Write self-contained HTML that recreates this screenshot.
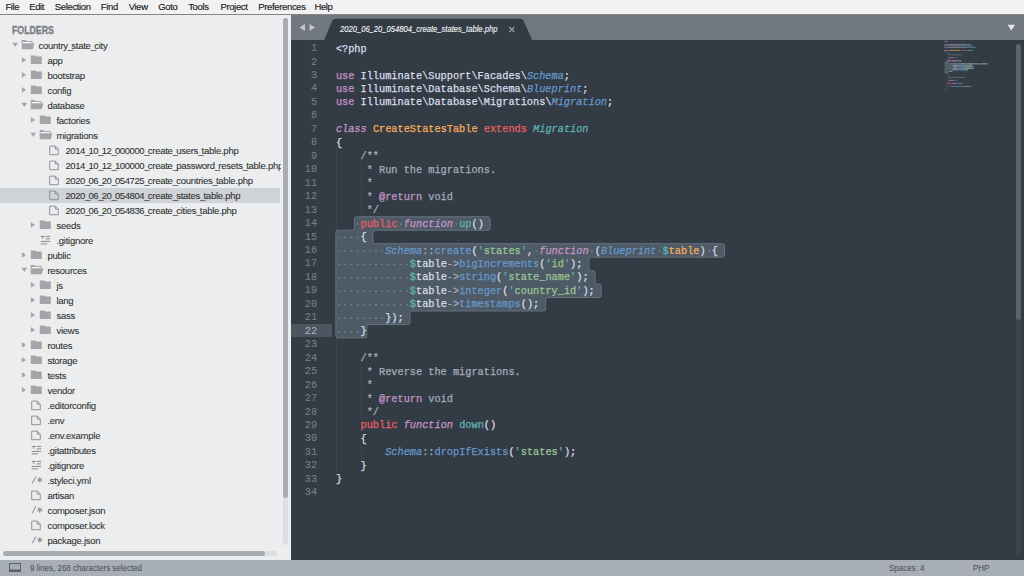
<!DOCTYPE html>
<html><head><meta charset="utf-8"><style>
html,body{margin:0;padding:0;width:1024px;height:576px;overflow:hidden;background:#333b45}
*{box-sizing:border-box}
.abs{position:absolute}
.ov{position:absolute;left:0;top:0;overflow:visible}
#menu{position:absolute;left:0;top:0;width:1024px;height:15px;background:#f2f2f2;border-bottom:1px solid #858585}
.mi{position:absolute;top:1px;font:9.5px/12px "Liberation Sans",sans-serif;color:#1a1a1a;letter-spacing:-0.35px;white-space:nowrap;-webkit-text-stroke:0.15px currentColor}
#side{position:absolute;left:0;top:15px;width:291px;height:545px;background:#ebedef;overflow:hidden}
#sidein{position:absolute;left:0;top:-15px;width:291px;height:576px}
.sr{position:absolute;height:15px;font:9.5px/15px "Liberation Sans",sans-serif;color:#303030;white-space:nowrap;-webkit-text-stroke:0.08px currentColor}
#folders{position:absolute;left:12.2px;top:24.6px;font:bold 10.2px/12px "Liberation Sans",sans-serif;color:#7a7c80;transform-origin:0 0;transform:scaleX(0.86);-webkit-text-stroke:0.3px currentColor}
#selrow{position:absolute;left:0;top:187.5px;width:280px;height:15px;background:#cfd2d6}
#tabbar{position:absolute;left:291px;top:15px;width:733px;height:25.3px;background:#71777f}
#editor{position:absolute;left:291px;top:40px;width:733px;height:520px;background:#333b45}
#status{position:absolute;left:0;top:560px;width:1024px;height:16px;background:#a8aeb7}
.st{position:absolute;top:1.5px;font:9px/12px "Liberation Sans",sans-serif;color:#474b51;white-space:nowrap;transform-origin:0 0;transform:scaleX(0.885)}
.ln{position:absolute;left:335.9px;height:13.46px;font:10.28px/13.46px "Liberation Mono",monospace;white-space:pre;color:#d8dee9;-webkit-text-stroke:0.25px currentColor}
.gn{position:absolute;left:291px;width:26.2px;-webkit-text-stroke:0.1px currentColor;height:13.46px;text-align:right;font:10.28px/13.46px "Liberation Mono",monospace;color:#75808a}
.gn.cur{color:#a9b1b9}
#curline{position:absolute;left:291px;top:323.9px;width:41px;height:13.46px;background:#4d5660}
</style></head><body>
<div id="menu"><div class="mi" style="left:5.4px">File</div><div class="mi" style="left:29.2px">Edit</div><div class="mi" style="left:54.8px">Selection</div><div class="mi" style="left:100.8px">Find</div><div class="mi" style="left:128.8px">View</div><div class="mi" style="left:158.2px">Goto</div><div class="mi" style="left:188.2px">Tools</div><div class="mi" style="left:220.4px">Project</div><div class="mi" style="left:258.3px">Preferences</div><div class="mi" style="left:314.4px">Help</div></div>
<div id="side">
 <div id="sidein">
  <div id="selrow"></div>
  <div id="folders">FOLDERS</div>
  <svg class="ov" width="291" height="576">
<path d="M12.3 42.7 h5.6 l-2.8 4.2 z" fill="#a3a5a8"/>
<path d="M21.70 40.10 h3.9 l0.9 0.9 h6.1 v2.3 h-1.2 v-1.1 h-8.5 v6.9 h-1.2 z" fill="#a3a5a8"/><rect x="22.90" y="42.00" width="8.6" height="1.3" fill="#f7f8f9"/><path d="M23.30 43.30 h11 l-1.5 6 h-11 z" fill="#a3a5a8"/>
<path d="M21.8 57.1 v5.6 l4.2 -2.8 z" fill="#a3a5a8"/>
<path d="M30.8 55.5 h4.6 l1 1 h5.4 v7.6 h-11 z" fill="#a3a5a8"/>
<path d="M21.8 72.1 v5.6 l4.2 -2.8 z" fill="#a3a5a8"/>
<path d="M30.8 70.5 h4.6 l1 1 h5.4 v7.6 h-11 z" fill="#a3a5a8"/>
<path d="M21.8 87.1 v5.6 l4.2 -2.8 z" fill="#a3a5a8"/>
<path d="M30.8 85.5 h4.6 l1 1 h5.4 v7.6 h-11 z" fill="#a3a5a8"/>
<path d="M21.5 102.7 h5.6 l-2.8 4.2 z" fill="#a3a5a8"/>
<path d="M30.70 100.10 h3.9 l0.9 0.9 h6.1 v2.3 h-1.2 v-1.1 h-8.5 v6.9 h-1.2 z" fill="#a3a5a8"/><rect x="31.90" y="102.00" width="8.6" height="1.3" fill="#f7f8f9"/><path d="M32.30 103.30 h11 l-1.5 6 h-11 z" fill="#a3a5a8"/>
<path d="M30.8 117.1 v5.6 l4.2 -2.8 z" fill="#a3a5a8"/>
<path d="M39.8 115.5 h4.6 l1 1 h5.4 v7.6 h-11 z" fill="#a3a5a8"/>
<path d="M30.5 132.7 h5.6 l-2.8 4.2 z" fill="#a3a5a8"/>
<path d="M39.70 130.10 h3.9 l0.9 0.9 h6.1 v2.3 h-1.2 v-1.1 h-8.5 v6.9 h-1.2 z" fill="#a3a5a8"/><rect x="40.90" y="132.00" width="8.6" height="1.3" fill="#f7f8f9"/><path d="M41.30 133.30 h11 l-1.5 6 h-11 z" fill="#a3a5a8"/>
<path d="M49.7 146.1 h5.6 l3 3 v5.6 h-8.6 z M55.3 146.1 v3 h3" fill="none" stroke="#909397" stroke-width="1"/>
<path d="M49.7 161.1 h5.6 l3 3 v5.6 h-8.6 z M55.3 161.1 v3 h3" fill="none" stroke="#909397" stroke-width="1"/>
<path d="M49.7 176.1 h5.6 l3 3 v5.6 h-8.6 z M55.3 176.1 v3 h3" fill="none" stroke="#909397" stroke-width="1"/>
<path d="M49.7 191.1 h5.6 l3 3 v5.6 h-8.6 z M55.3 191.1 v3 h3" fill="none" stroke="#909397" stroke-width="1"/>
<path d="M49.7 206.1 h5.6 l3 3 v5.6 h-8.6 z M55.3 206.1 v3 h3" fill="none" stroke="#909397" stroke-width="1"/>
<path d="M30.8 222.1 v5.6 l4.2 -2.8 z" fill="#a3a5a8"/>
<path d="M39.8 220.5 h4.6 l1 1 h5.4 v7.6 h-11 z" fill="#a3a5a8"/>
<g stroke="#85888c" stroke-width="1"><line x1="40.7" y1="236.4" x2="44.7" y2="236.4"/><line x1="42.7" y1="236.4" x2="42.7" y2="238.9"/><line x1="45.7" y1="236.4" x2="50.2" y2="236.4"/><line x1="45.7" y1="238.9" x2="50.2" y2="238.9"/><line x1="40.7" y1="241.4" x2="50.2" y2="241.4"/><line x1="40.7" y1="243.9" x2="47.2" y2="243.9"/></g>
<path d="M21.8 252.1 v5.6 l4.2 -2.8 z" fill="#a3a5a8"/>
<path d="M30.8 250.5 h4.6 l1 1 h5.4 v7.6 h-11 z" fill="#a3a5a8"/>
<path d="M21.5 267.7 h5.6 l-2.8 4.2 z" fill="#a3a5a8"/>
<path d="M30.70 265.10 h3.9 l0.9 0.9 h6.1 v2.3 h-1.2 v-1.1 h-8.5 v6.9 h-1.2 z" fill="#a3a5a8"/><rect x="31.90" y="267.00" width="8.6" height="1.3" fill="#f7f8f9"/><path d="M32.30 268.30 h11 l-1.5 6 h-11 z" fill="#a3a5a8"/>
<path d="M30.8 282.1 v5.6 l4.2 -2.8 z" fill="#a3a5a8"/>
<path d="M39.8 280.5 h4.6 l1 1 h5.4 v7.6 h-11 z" fill="#a3a5a8"/>
<path d="M30.8 297.1 v5.6 l4.2 -2.8 z" fill="#a3a5a8"/>
<path d="M39.8 295.5 h4.6 l1 1 h5.4 v7.6 h-11 z" fill="#a3a5a8"/>
<path d="M30.8 312.1 v5.6 l4.2 -2.8 z" fill="#a3a5a8"/>
<path d="M39.8 310.5 h4.6 l1 1 h5.4 v7.6 h-11 z" fill="#a3a5a8"/>
<path d="M30.8 327.1 v5.6 l4.2 -2.8 z" fill="#a3a5a8"/>
<path d="M39.8 325.5 h4.6 l1 1 h5.4 v7.6 h-11 z" fill="#a3a5a8"/>
<path d="M21.8 342.1 v5.6 l4.2 -2.8 z" fill="#a3a5a8"/>
<path d="M30.8 340.5 h4.6 l1 1 h5.4 v7.6 h-11 z" fill="#a3a5a8"/>
<path d="M21.8 357.1 v5.6 l4.2 -2.8 z" fill="#a3a5a8"/>
<path d="M30.8 355.5 h4.6 l1 1 h5.4 v7.6 h-11 z" fill="#a3a5a8"/>
<path d="M21.8 372.1 v5.6 l4.2 -2.8 z" fill="#a3a5a8"/>
<path d="M30.8 370.5 h4.6 l1 1 h5.4 v7.6 h-11 z" fill="#a3a5a8"/>
<path d="M21.8 387.1 v5.6 l4.2 -2.8 z" fill="#a3a5a8"/>
<path d="M30.8 385.5 h4.6 l1 1 h5.4 v7.6 h-11 z" fill="#a3a5a8"/>
<path d="M31.7 401.1 h5.6 l3 3 v5.6 h-8.6 z M37.3 401.1 v3 h3" fill="none" stroke="#909397" stroke-width="1"/>
<path d="M31.7 416.1 h5.6 l3 3 v5.6 h-8.6 z M37.3 416.1 v3 h3" fill="none" stroke="#909397" stroke-width="1"/>
<path d="M31.7 431.1 h5.6 l3 3 v5.6 h-8.6 z M37.3 431.1 v3 h3" fill="none" stroke="#909397" stroke-width="1"/>
<g stroke="#85888c" stroke-width="1"><line x1="31.7" y1="446.4" x2="35.7" y2="446.4"/><line x1="33.7" y1="446.4" x2="33.7" y2="448.9"/><line x1="36.7" y1="446.4" x2="41.2" y2="446.4"/><line x1="36.7" y1="448.9" x2="41.2" y2="448.9"/><line x1="31.7" y1="451.4" x2="41.2" y2="451.4"/><line x1="31.7" y1="453.9" x2="38.2" y2="453.9"/></g>
<g stroke="#85888c" stroke-width="1"><line x1="31.7" y1="461.4" x2="35.7" y2="461.4"/><line x1="33.7" y1="461.4" x2="33.7" y2="463.9"/><line x1="36.7" y1="461.4" x2="41.2" y2="461.4"/><line x1="36.7" y1="463.9" x2="41.2" y2="463.9"/><line x1="31.7" y1="466.4" x2="41.2" y2="466.4"/><line x1="31.7" y1="468.9" x2="38.2" y2="468.9"/></g>
<g stroke="#85888c" stroke-width="1" fill="none"><line x1="32.3" y1="483.4" x2="35.8" y2="476.4"/><line x1="39.8" y1="477.2" x2="39.8" y2="482.6"/><line x1="37.4" y1="478.6" x2="42.2" y2="481.2"/><line x1="37.4" y1="481.2" x2="42.2" y2="478.6"/></g>
<path d="M31.7 491.1 h5.6 l3 3 v5.6 h-8.6 z M37.3 491.1 v3 h3" fill="none" stroke="#909397" stroke-width="1"/>
<g stroke="#85888c" stroke-width="1" fill="none"><line x1="32.3" y1="513.4" x2="35.8" y2="506.4"/><line x1="39.8" y1="507.2" x2="39.8" y2="512.6"/><line x1="37.4" y1="508.6" x2="42.2" y2="511.2"/><line x1="37.4" y1="511.2" x2="42.2" y2="508.6"/></g>
<path d="M31.7 521.1 h5.6 l3 3 v5.6 h-8.6 z M37.3 521.1 v3 h3" fill="none" stroke="#909397" stroke-width="1"/>
<g stroke="#85888c" stroke-width="1" fill="none"><line x1="32.3" y1="543.4" x2="35.8" y2="536.4"/><line x1="39.8" y1="537.2" x2="39.8" y2="542.6"/><line x1="37.4" y1="538.6" x2="42.2" y2="541.2"/><line x1="37.4" y1="541.2" x2="42.2" y2="538.6"/></g>
</svg>
  <div class="abs" style="left:0;top:0;width:280.5px;height:576px;overflow:hidden"><div class="sr" style="left:38.4px;top:38.4px"><span style="letter-spacing:-0.25px">country</span><span style="letter-spacing:-1.80px">_</span><span style="letter-spacing:-0.25px">state</span><span style="letter-spacing:-1.80px">_</span><span style="letter-spacing:-0.25px">city</span></div>
<div class="sr" style="left:47.4px;top:53.4px"><span style="letter-spacing:-0.25px">app</span></div>
<div class="sr" style="left:47.4px;top:68.4px"><span style="letter-spacing:-0.25px">bootstrap</span></div>
<div class="sr" style="left:47.4px;top:83.4px"><span style="letter-spacing:-0.25px">config</span></div>
<div class="sr" style="left:47.4px;top:98.4px"><span style="letter-spacing:-0.25px">database</span></div>
<div class="sr" style="left:56.4px;top:113.4px"><span style="letter-spacing:-0.25px">factories</span></div>
<div class="sr" style="left:56.4px;top:128.4px"><span style="letter-spacing:-0.25px">migrations</span></div>
<div class="sr" style="left:65.4px;top:143.4px"><span style="letter-spacing:-0.40px">2014</span><span style="letter-spacing:-1.80px">_</span><span style="letter-spacing:-0.40px">10</span><span style="letter-spacing:-1.80px">_</span><span style="letter-spacing:-0.40px">12</span><span style="letter-spacing:-1.80px">_</span><span style="letter-spacing:-0.40px">000000</span><span style="letter-spacing:-1.80px">_</span><span style="letter-spacing:-0.25px">create</span><span style="letter-spacing:-1.80px">_</span><span style="letter-spacing:-0.25px">users</span><span style="letter-spacing:-1.80px">_</span><span style="letter-spacing:-0.25px">table.php</span></div>
<div class="sr" style="left:65.4px;top:158.4px"><span style="letter-spacing:-0.40px">2014</span><span style="letter-spacing:-1.80px">_</span><span style="letter-spacing:-0.40px">10</span><span style="letter-spacing:-1.80px">_</span><span style="letter-spacing:-0.40px">12</span><span style="letter-spacing:-1.80px">_</span><span style="letter-spacing:-0.40px">100000</span><span style="letter-spacing:-1.80px">_</span><span style="letter-spacing:-0.25px">create</span><span style="letter-spacing:-1.80px">_</span><span style="letter-spacing:-0.25px">password</span><span style="letter-spacing:-1.80px">_</span><span style="letter-spacing:-0.25px">resets</span><span style="letter-spacing:-1.80px">_</span><span style="letter-spacing:-0.25px">table.php</span></div>
<div class="sr" style="left:65.4px;top:173.4px"><span style="letter-spacing:-0.40px">2020</span><span style="letter-spacing:-1.80px">_</span><span style="letter-spacing:-0.40px">06</span><span style="letter-spacing:-1.80px">_</span><span style="letter-spacing:-0.40px">20</span><span style="letter-spacing:-1.80px">_</span><span style="letter-spacing:-0.40px">054725</span><span style="letter-spacing:-1.80px">_</span><span style="letter-spacing:-0.25px">create</span><span style="letter-spacing:-1.80px">_</span><span style="letter-spacing:-0.25px">countries</span><span style="letter-spacing:-1.80px">_</span><span style="letter-spacing:-0.25px">table.php</span></div>
<div class="sr sel" style="left:65.4px;top:188.4px"><span style="letter-spacing:-0.40px">2020</span><span style="letter-spacing:-1.80px">_</span><span style="letter-spacing:-0.40px">06</span><span style="letter-spacing:-1.80px">_</span><span style="letter-spacing:-0.40px">20</span><span style="letter-spacing:-1.80px">_</span><span style="letter-spacing:-0.40px">054804</span><span style="letter-spacing:-1.80px">_</span><span style="letter-spacing:-0.25px">create</span><span style="letter-spacing:-1.80px">_</span><span style="letter-spacing:-0.25px">states</span><span style="letter-spacing:-1.80px">_</span><span style="letter-spacing:-0.25px">table.php</span></div>
<div class="sr" style="left:65.4px;top:203.4px"><span style="letter-spacing:-0.40px">2020</span><span style="letter-spacing:-1.80px">_</span><span style="letter-spacing:-0.40px">06</span><span style="letter-spacing:-1.80px">_</span><span style="letter-spacing:-0.40px">20</span><span style="letter-spacing:-1.80px">_</span><span style="letter-spacing:-0.40px">054836</span><span style="letter-spacing:-1.80px">_</span><span style="letter-spacing:-0.25px">create</span><span style="letter-spacing:-1.80px">_</span><span style="letter-spacing:-0.25px">cities</span><span style="letter-spacing:-1.80px">_</span><span style="letter-spacing:-0.25px">table.php</span></div>
<div class="sr" style="left:56.4px;top:218.4px"><span style="letter-spacing:-0.25px">seeds</span></div>
<div class="sr" style="left:56.4px;top:233.4px"><span style="letter-spacing:-0.25px">.gitignore</span></div>
<div class="sr" style="left:47.4px;top:248.4px"><span style="letter-spacing:-0.25px">public</span></div>
<div class="sr" style="left:47.4px;top:263.4px"><span style="letter-spacing:-0.25px">resources</span></div>
<div class="sr" style="left:56.4px;top:278.4px"><span style="letter-spacing:-0.25px">js</span></div>
<div class="sr" style="left:56.4px;top:293.4px"><span style="letter-spacing:-0.25px">lang</span></div>
<div class="sr" style="left:56.4px;top:308.4px"><span style="letter-spacing:-0.25px">sass</span></div>
<div class="sr" style="left:56.4px;top:323.4px"><span style="letter-spacing:-0.25px">views</span></div>
<div class="sr" style="left:47.4px;top:338.4px"><span style="letter-spacing:-0.25px">routes</span></div>
<div class="sr" style="left:47.4px;top:353.4px"><span style="letter-spacing:-0.25px">storage</span></div>
<div class="sr" style="left:47.4px;top:368.4px"><span style="letter-spacing:-0.25px">tests</span></div>
<div class="sr" style="left:47.4px;top:383.4px"><span style="letter-spacing:-0.25px">vendor</span></div>
<div class="sr" style="left:47.4px;top:398.4px"><span style="letter-spacing:-0.25px">.editorconfig</span></div>
<div class="sr" style="left:47.4px;top:413.4px"><span style="letter-spacing:-0.25px">.env</span></div>
<div class="sr" style="left:47.4px;top:428.4px"><span style="letter-spacing:-0.25px">.env.example</span></div>
<div class="sr" style="left:47.4px;top:443.4px"><span style="letter-spacing:-0.25px">.gitattributes</span></div>
<div class="sr" style="left:47.4px;top:458.4px"><span style="letter-spacing:-0.25px">.gitignore</span></div>
<div class="sr" style="left:47.4px;top:473.4px"><span style="letter-spacing:-0.25px">.styleci.yml</span></div>
<div class="sr" style="left:47.4px;top:488.4px"><span style="letter-spacing:-0.25px">artisan</span></div>
<div class="sr" style="left:47.4px;top:503.4px"><span style="letter-spacing:-0.25px">composer.json</span></div>
<div class="sr" style="left:47.4px;top:518.4px"><span style="letter-spacing:-0.25px">composer.lock</span></div>
<div class="sr" style="left:47.4px;top:533.4px"><span style="letter-spacing:-0.25px">package.json</span></div></div>
  <div class="abs" style="left:282.8px;top:18.3px;width:5.2px;height:526.5px;border-radius:2.6px;background:#dcdfe2"></div>
  <div class="abs" style="left:282.8px;top:18.3px;width:5.2px;height:480px;border-radius:2.6px;background:#a9acb0"></div>
  <div class="abs" style="left:3.2px;top:551.2px;width:273.5px;height:5px;border-radius:2.5px;background:#dcdfe2"></div>
  <div class="abs" style="left:3.2px;top:551.2px;width:262.3px;height:5px;border-radius:2.5px;background:#a9acb0"></div>
 </div>
</div>
<div id="tabbar"></div>
<svg class="ov" width="1024" height="576">
 <path d="M299.5 27.5 l5.5 -3.6 v7.2 z" fill="#c3c7cc"/>
 <path d="M315 27.5 l-5.5 -3.6 v7.2 z" fill="#c3c7cc"/>
 <path d="M324 40.5 L332.4 20.2 Q333.1 18.7 334.8 18.7 L520.8 18.7 Q522.6 18.7 523.3 20.2 L532.4 40.5 Z" fill="#333b45"/>
 <path d="M1007.6 24.8 h7.4 l-3.7 5.6 z" fill="#e6e8ea"/>
</svg>
<div class="abs" style="left:340.4px;top:23.2px;font:italic 9.2px/12px 'Liberation Sans',sans-serif;color:#eef0f2;white-space:nowrap;transform-origin:0 0;transform:scaleX(0.828);-webkit-text-stroke:0.15px currentColor">2020_06_20_054804_create_states_table.php</div>
<svg class="ov" width="1024" height="576"><g stroke="#9aa1a8" stroke-width="1.1"><line x1="509.3" y1="27" x2="514.3" y2="32"/><line x1="514.3" y1="27" x2="509.3" y2="32"/></g></svg>
<div id="editor"></div>
<div id="curline"></div>
<div class="gn" style="top:42.10px">1</div>
<div class="gn" style="top:55.56px">2</div>
<div class="gn" style="top:69.02px">3</div>
<div class="gn" style="top:82.48px">4</div>
<div class="gn" style="top:95.94px">5</div>
<div class="gn" style="top:109.40px">6</div>
<div class="gn" style="top:122.86px">7</div>
<div class="gn" style="top:136.32px">8</div>
<div class="gn" style="top:149.78px">9</div>
<div class="gn" style="top:163.24px">10</div>
<div class="gn" style="top:176.70px">11</div>
<div class="gn" style="top:190.16px">12</div>
<div class="gn" style="top:203.62px">13</div>
<div class="gn" style="top:217.08px">14</div>
<div class="gn" style="top:230.54px">15</div>
<div class="gn" style="top:244.00px">16</div>
<div class="gn" style="top:257.46px">17</div>
<div class="gn" style="top:270.92px">18</div>
<div class="gn" style="top:284.38px">19</div>
<div class="gn" style="top:297.84px">20</div>
<div class="gn" style="top:311.30px">21</div>
<div class="gn cur" style="top:324.76px">22</div>
<div class="gn" style="top:338.22px">23</div>
<div class="gn" style="top:351.68px">24</div>
<div class="gn" style="top:365.14px">25</div>
<div class="gn" style="top:378.60px">26</div>
<div class="gn" style="top:392.06px">27</div>
<div class="gn" style="top:405.52px">28</div>
<div class="gn" style="top:418.98px">29</div>
<div class="gn" style="top:432.44px">30</div>
<div class="gn" style="top:445.90px">31</div>
<div class="gn" style="top:459.36px">32</div>
<div class="gn" style="top:472.82px">33</div>
<div class="gn" style="top:486.28px">34</div>
<svg class="ov" width="1024" height="576" viewBox="0 0 1024 576">
<line x1="336.5" y1="149.48" x2="336.5" y2="162.94" stroke="#48515a" stroke-width="1" stroke-dasharray="1 1"/>
<line x1="336.5" y1="162.94" x2="336.5" y2="176.40" stroke="#48515a" stroke-width="1" stroke-dasharray="1 1"/>
<line x1="361.5" y1="162.94" x2="361.5" y2="176.40" stroke="#48515a" stroke-width="1" stroke-dasharray="1 1"/>
<line x1="336.5" y1="176.40" x2="336.5" y2="189.86" stroke="#48515a" stroke-width="1" stroke-dasharray="1 1"/>
<line x1="361.5" y1="176.40" x2="361.5" y2="189.86" stroke="#48515a" stroke-width="1" stroke-dasharray="1 1"/>
<line x1="336.5" y1="189.86" x2="336.5" y2="203.32" stroke="#48515a" stroke-width="1" stroke-dasharray="1 1"/>
<line x1="361.5" y1="189.86" x2="361.5" y2="203.32" stroke="#48515a" stroke-width="1" stroke-dasharray="1 1"/>
<line x1="336.5" y1="203.32" x2="336.5" y2="216.78" stroke="#48515a" stroke-width="1" stroke-dasharray="1 1"/>
<line x1="361.5" y1="203.32" x2="361.5" y2="216.78" stroke="#48515a" stroke-width="1" stroke-dasharray="1 1"/>
<line x1="336.5" y1="216.78" x2="336.5" y2="230.24" stroke="#48515a" stroke-width="1" stroke-dasharray="1 1"/>
<line x1="336.5" y1="337.92" x2="336.5" y2="351.38" stroke="#48515a" stroke-width="1" stroke-dasharray="1 1"/>
<line x1="336.5" y1="351.38" x2="336.5" y2="364.84" stroke="#48515a" stroke-width="1" stroke-dasharray="1 1"/>
<line x1="336.5" y1="364.84" x2="336.5" y2="378.30" stroke="#48515a" stroke-width="1" stroke-dasharray="1 1"/>
<line x1="361.5" y1="364.84" x2="361.5" y2="378.30" stroke="#48515a" stroke-width="1" stroke-dasharray="1 1"/>
<line x1="336.5" y1="378.30" x2="336.5" y2="391.76" stroke="#48515a" stroke-width="1" stroke-dasharray="1 1"/>
<line x1="361.5" y1="378.30" x2="361.5" y2="391.76" stroke="#48515a" stroke-width="1" stroke-dasharray="1 1"/>
<line x1="336.5" y1="391.76" x2="336.5" y2="405.22" stroke="#48515a" stroke-width="1" stroke-dasharray="1 1"/>
<line x1="361.5" y1="391.76" x2="361.5" y2="405.22" stroke="#48515a" stroke-width="1" stroke-dasharray="1 1"/>
<line x1="336.5" y1="405.22" x2="336.5" y2="418.68" stroke="#48515a" stroke-width="1" stroke-dasharray="1 1"/>
<line x1="361.5" y1="405.22" x2="361.5" y2="418.68" stroke="#48515a" stroke-width="1" stroke-dasharray="1 1"/>
<line x1="336.5" y1="418.68" x2="336.5" y2="432.14" stroke="#48515a" stroke-width="1" stroke-dasharray="1 1"/>
<line x1="336.5" y1="432.14" x2="336.5" y2="445.60" stroke="#48515a" stroke-width="1" stroke-dasharray="1 1"/>
<line x1="336.5" y1="445.60" x2="336.5" y2="459.06" stroke="#48515a" stroke-width="1" stroke-dasharray="1 1"/>
<line x1="361.5" y1="445.60" x2="361.5" y2="459.06" stroke="#48515a" stroke-width="1" stroke-dasharray="1 1"/>
<line x1="336.5" y1="459.06" x2="336.5" y2="472.52" stroke="#48515a" stroke-width="1" stroke-dasharray="1 1"/>
<path d="M487.95 216.78 Q490.15 216.78 490.15 218.98L490.15 228.04 Q490.15 230.24 487.95 230.24L375.12 230.24 Q372.92 230.24 372.92 232.44L372.92 241.50 Q372.92 243.70 375.12 243.70L722.41 243.70 Q724.61 243.70 724.61 245.90L724.61 254.96 Q724.61 257.16 722.41 257.16L591.07 257.16 Q588.87 257.16 588.87 259.36L588.87 268.42 Q588.87 270.62 591.07 270.62L592.84 270.62 Q595.04 270.62 595.04 272.82L595.04 281.88 Q595.04 284.08 597.24 284.08L599.01 284.08 Q601.21 284.08 601.21 286.28L601.21 295.34 Q601.21 297.54 599.01 297.54L547.88 297.54 Q545.68 297.54 545.68 299.74L545.68 308.80 Q545.68 311.00 543.48 311.00L412.14 311.00 Q409.94 311.00 409.94 313.20L409.94 322.26 Q409.94 324.46 407.74 324.46L368.95 324.46 Q366.75 324.46 366.75 326.66L366.75 335.72 Q366.75 337.92 364.55 337.92L338.10 337.92 Q335.90 337.92 335.90 335.72L335.90 232.44 Q335.90 230.24 338.10 230.24L352.21 230.24 Q354.41 230.24 354.41 228.04L354.41 218.98 Q354.41 216.78 356.61 216.78Z" fill="#4e5a65" stroke="#65737e" stroke-width="1"/>
<rect x="356.79" y="223.31" width="1.4" height="1.4" fill="#808a94"/>
<rect x="399.98" y="223.31" width="1.4" height="1.4" fill="#808a94"/>
<rect x="455.51" y="223.31" width="1.4" height="1.4" fill="#808a94"/>
<rect x="338.28" y="236.77" width="1.4" height="1.4" fill="#808a94"/>
<rect x="344.45" y="236.77" width="1.4" height="1.4" fill="#808a94"/>
<rect x="350.62" y="236.77" width="1.4" height="1.4" fill="#808a94"/>
<rect x="356.79" y="236.77" width="1.4" height="1.4" fill="#808a94"/>
<rect x="338.28" y="250.23" width="1.4" height="1.4" fill="#808a94"/>
<rect x="344.45" y="250.23" width="1.4" height="1.4" fill="#808a94"/>
<rect x="350.62" y="250.23" width="1.4" height="1.4" fill="#808a94"/>
<rect x="356.79" y="250.23" width="1.4" height="1.4" fill="#808a94"/>
<rect x="362.96" y="250.23" width="1.4" height="1.4" fill="#808a94"/>
<rect x="369.13" y="250.23" width="1.4" height="1.4" fill="#808a94"/>
<rect x="375.30" y="250.23" width="1.4" height="1.4" fill="#808a94"/>
<rect x="381.47" y="250.23" width="1.4" height="1.4" fill="#808a94"/>
<rect x="535.72" y="250.23" width="1.4" height="1.4" fill="#808a94"/>
<rect x="591.25" y="250.23" width="1.4" height="1.4" fill="#808a94"/>
<rect x="659.12" y="250.23" width="1.4" height="1.4" fill="#808a94"/>
<rect x="708.48" y="250.23" width="1.4" height="1.4" fill="#808a94"/>
<rect x="338.28" y="263.69" width="1.4" height="1.4" fill="#808a94"/>
<rect x="344.45" y="263.69" width="1.4" height="1.4" fill="#808a94"/>
<rect x="350.62" y="263.69" width="1.4" height="1.4" fill="#808a94"/>
<rect x="356.79" y="263.69" width="1.4" height="1.4" fill="#808a94"/>
<rect x="362.96" y="263.69" width="1.4" height="1.4" fill="#808a94"/>
<rect x="369.13" y="263.69" width="1.4" height="1.4" fill="#808a94"/>
<rect x="375.30" y="263.69" width="1.4" height="1.4" fill="#808a94"/>
<rect x="381.47" y="263.69" width="1.4" height="1.4" fill="#808a94"/>
<rect x="387.64" y="263.69" width="1.4" height="1.4" fill="#808a94"/>
<rect x="393.81" y="263.69" width="1.4" height="1.4" fill="#808a94"/>
<rect x="399.98" y="263.69" width="1.4" height="1.4" fill="#808a94"/>
<rect x="406.15" y="263.69" width="1.4" height="1.4" fill="#808a94"/>
<rect x="338.28" y="277.15" width="1.4" height="1.4" fill="#808a94"/>
<rect x="344.45" y="277.15" width="1.4" height="1.4" fill="#808a94"/>
<rect x="350.62" y="277.15" width="1.4" height="1.4" fill="#808a94"/>
<rect x="356.79" y="277.15" width="1.4" height="1.4" fill="#808a94"/>
<rect x="362.96" y="277.15" width="1.4" height="1.4" fill="#808a94"/>
<rect x="369.13" y="277.15" width="1.4" height="1.4" fill="#808a94"/>
<rect x="375.30" y="277.15" width="1.4" height="1.4" fill="#808a94"/>
<rect x="381.47" y="277.15" width="1.4" height="1.4" fill="#808a94"/>
<rect x="387.64" y="277.15" width="1.4" height="1.4" fill="#808a94"/>
<rect x="393.81" y="277.15" width="1.4" height="1.4" fill="#808a94"/>
<rect x="399.98" y="277.15" width="1.4" height="1.4" fill="#808a94"/>
<rect x="406.15" y="277.15" width="1.4" height="1.4" fill="#808a94"/>
<rect x="338.28" y="290.61" width="1.4" height="1.4" fill="#808a94"/>
<rect x="344.45" y="290.61" width="1.4" height="1.4" fill="#808a94"/>
<rect x="350.62" y="290.61" width="1.4" height="1.4" fill="#808a94"/>
<rect x="356.79" y="290.61" width="1.4" height="1.4" fill="#808a94"/>
<rect x="362.96" y="290.61" width="1.4" height="1.4" fill="#808a94"/>
<rect x="369.13" y="290.61" width="1.4" height="1.4" fill="#808a94"/>
<rect x="375.30" y="290.61" width="1.4" height="1.4" fill="#808a94"/>
<rect x="381.47" y="290.61" width="1.4" height="1.4" fill="#808a94"/>
<rect x="387.64" y="290.61" width="1.4" height="1.4" fill="#808a94"/>
<rect x="393.81" y="290.61" width="1.4" height="1.4" fill="#808a94"/>
<rect x="399.98" y="290.61" width="1.4" height="1.4" fill="#808a94"/>
<rect x="406.15" y="290.61" width="1.4" height="1.4" fill="#808a94"/>
<rect x="338.28" y="304.07" width="1.4" height="1.4" fill="#808a94"/>
<rect x="344.45" y="304.07" width="1.4" height="1.4" fill="#808a94"/>
<rect x="350.62" y="304.07" width="1.4" height="1.4" fill="#808a94"/>
<rect x="356.79" y="304.07" width="1.4" height="1.4" fill="#808a94"/>
<rect x="362.96" y="304.07" width="1.4" height="1.4" fill="#808a94"/>
<rect x="369.13" y="304.07" width="1.4" height="1.4" fill="#808a94"/>
<rect x="375.30" y="304.07" width="1.4" height="1.4" fill="#808a94"/>
<rect x="381.47" y="304.07" width="1.4" height="1.4" fill="#808a94"/>
<rect x="387.64" y="304.07" width="1.4" height="1.4" fill="#808a94"/>
<rect x="393.81" y="304.07" width="1.4" height="1.4" fill="#808a94"/>
<rect x="399.98" y="304.07" width="1.4" height="1.4" fill="#808a94"/>
<rect x="406.15" y="304.07" width="1.4" height="1.4" fill="#808a94"/>
<rect x="338.28" y="317.53" width="1.4" height="1.4" fill="#808a94"/>
<rect x="344.45" y="317.53" width="1.4" height="1.4" fill="#808a94"/>
<rect x="350.62" y="317.53" width="1.4" height="1.4" fill="#808a94"/>
<rect x="356.79" y="317.53" width="1.4" height="1.4" fill="#808a94"/>
<rect x="362.96" y="317.53" width="1.4" height="1.4" fill="#808a94"/>
<rect x="369.13" y="317.53" width="1.4" height="1.4" fill="#808a94"/>
<rect x="375.30" y="317.53" width="1.4" height="1.4" fill="#808a94"/>
<rect x="381.47" y="317.53" width="1.4" height="1.4" fill="#808a94"/>
<rect x="338.28" y="330.99" width="1.4" height="1.4" fill="#808a94"/>
<rect x="344.45" y="330.99" width="1.4" height="1.4" fill="#808a94"/>
<rect x="350.62" y="330.99" width="1.4" height="1.4" fill="#808a94"/>
<rect x="356.79" y="330.99" width="1.4" height="1.4" fill="#808a94"/>
</svg>
<div class="ln" style="top:42.60px"><span style="color:#d8dee9">&lt;?php</span></div>
<div class="ln" style="top:56.06px"></div>
<div class="ln" style="top:69.52px"><span style="color:#c695c6">use</span><span style="color:#d8dee9"> Illuminate\Support\Facades\</span><span style="color:#6699cc;font-style:italic">Schema</span><span style="color:#d8dee9">;</span></div>
<div class="ln" style="top:82.98px"><span style="color:#c695c6">use</span><span style="color:#d8dee9"> Illuminate\Database\Schema\</span><span style="color:#6699cc;font-style:italic">Blueprint</span><span style="color:#d8dee9">;</span></div>
<div class="ln" style="top:96.44px"><span style="color:#c695c6">use</span><span style="color:#d8dee9"> Illuminate\Database\Migrations\</span><span style="color:#6699cc;font-style:italic">Migration</span><span style="color:#d8dee9">;</span></div>
<div class="ln" style="top:109.90px"></div>
<div class="ln" style="top:123.36px"><span style="color:#c695c6;font-style:italic">class</span><span style="color:#d8dee9"> </span><span style="color:#f9ae58">CreateStatesTable</span><span style="color:#d8dee9"> </span><span style="color:#ec5f66">extends</span><span style="color:#d8dee9"> </span><span style="color:#5fb4b4;font-style:italic">Migration</span></div>
<div class="ln" style="top:136.82px"><span style="color:#d8dee9">{</span></div>
<div class="ln" style="top:150.28px"><span style="color:#a6acb9">    /**</span></div>
<div class="ln" style="top:163.74px"><span style="color:#a6acb9">     * Run the migrations.</span></div>
<div class="ln" style="top:177.20px"><span style="color:#a6acb9">     *</span></div>
<div class="ln" style="top:190.66px"><span style="color:#a6acb9">     * </span><span style="color:#c695c6">@return</span><span style="color:#a6acb9"> void</span></div>
<div class="ln" style="top:204.12px"><span style="color:#a6acb9">     */</span></div>
<div class="ln" style="top:217.58px"><span style="color:#d8dee9">    </span><span style="color:#ec5f66">public</span><span style="color:#d8dee9"> </span><span style="color:#c695c6;font-style:italic">function</span><span style="color:#d8dee9"> </span><span style="color:#5fb4b4">up</span><span style="color:#d8dee9">()</span></div>
<div class="ln" style="top:231.04px"><span style="color:#d8dee9">    {</span></div>
<div class="ln" style="top:244.50px"><span style="color:#d8dee9">        </span><span style="color:#6699cc;font-style:italic">Schema</span><span style="color:#a6acb9">::</span><span style="color:#6699cc">create</span><span style="color:#d8dee9">(</span><span style="color:#5fb4b4">&#x27;</span><span style="color:#99c794">states</span><span style="color:#5fb4b4">&#x27;</span><span style="color:#d8dee9">, </span><span style="color:#c695c6;font-style:italic">function</span><span style="color:#d8dee9"> (</span><span style="color:#6699cc;font-style:italic">Blueprint</span><span style="color:#d8dee9"> </span><span style="color:#5fb4b4">$</span><span style="color:#f9ae58">table</span><span style="color:#d8dee9">) {</span></div>
<div class="ln" style="top:257.96px"><span style="color:#d8dee9">            </span><span style="color:#5fb4b4">$</span><span style="color:#d8dee9">table</span><span style="color:#a6acb9">-&gt;</span><span style="color:#6699cc">bigIncrements</span><span style="color:#d8dee9">(</span><span style="color:#5fb4b4">&#x27;</span><span style="color:#99c794">id</span><span style="color:#5fb4b4">&#x27;</span><span style="color:#d8dee9">);</span></div>
<div class="ln" style="top:271.42px"><span style="color:#d8dee9">            </span><span style="color:#5fb4b4">$</span><span style="color:#d8dee9">table</span><span style="color:#a6acb9">-&gt;</span><span style="color:#6699cc">string</span><span style="color:#d8dee9">(</span><span style="color:#5fb4b4">&#x27;</span><span style="color:#99c794">state_name</span><span style="color:#5fb4b4">&#x27;</span><span style="color:#d8dee9">);</span></div>
<div class="ln" style="top:284.88px"><span style="color:#d8dee9">            </span><span style="color:#5fb4b4">$</span><span style="color:#d8dee9">table</span><span style="color:#a6acb9">-&gt;</span><span style="color:#6699cc">integer</span><span style="color:#d8dee9">(</span><span style="color:#5fb4b4">&#x27;</span><span style="color:#99c794">country_id</span><span style="color:#5fb4b4">&#x27;</span><span style="color:#d8dee9">);</span></div>
<div class="ln" style="top:298.34px"><span style="color:#d8dee9">            </span><span style="color:#5fb4b4">$</span><span style="color:#d8dee9">table</span><span style="color:#a6acb9">-&gt;</span><span style="color:#6699cc">timestamps</span><span style="color:#d8dee9">();</span></div>
<div class="ln" style="top:311.80px"><span style="color:#d8dee9">        });</span></div>
<div class="ln" style="top:325.26px"><span style="color:#d8dee9">    }</span></div>
<div class="ln" style="top:338.72px"></div>
<div class="ln" style="top:352.18px"><span style="color:#a6acb9">    /**</span></div>
<div class="ln" style="top:365.64px"><span style="color:#a6acb9">     * Reverse the migrations.</span></div>
<div class="ln" style="top:379.10px"><span style="color:#a6acb9">     *</span></div>
<div class="ln" style="top:392.56px"><span style="color:#a6acb9">     * </span><span style="color:#c695c6">@return</span><span style="color:#a6acb9"> void</span></div>
<div class="ln" style="top:406.02px"><span style="color:#a6acb9">     */</span></div>
<div class="ln" style="top:419.48px"><span style="color:#d8dee9">    </span><span style="color:#ec5f66">public</span><span style="color:#d8dee9"> </span><span style="color:#c695c6;font-style:italic">function</span><span style="color:#d8dee9"> </span><span style="color:#5fb4b4">down</span><span style="color:#d8dee9">()</span></div>
<div class="ln" style="top:432.94px"><span style="color:#d8dee9">    {</span></div>
<div class="ln" style="top:446.40px"><span style="color:#d8dee9">        </span><span style="color:#6699cc;font-style:italic">Schema</span><span style="color:#a6acb9">::</span><span style="color:#6699cc">dropIfExists</span><span style="color:#d8dee9">(</span><span style="color:#5fb4b4">&#x27;</span><span style="color:#99c794">states</span><span style="color:#5fb4b4">&#x27;</span><span style="color:#d8dee9">);</span></div>
<div class="ln" style="top:459.86px"><span style="color:#d8dee9">    }</span></div>
<div class="ln" style="top:473.32px"><span style="color:#d8dee9">}</span></div>
<div class="ln" style="top:486.78px"></div>
<svg class="ov" width="1024" height="576">
<rect x="946.57" y="60.10" width="15.18" height="1.50" fill="#56616c"/>
<rect x="944.50" y="61.60" width="4.14" height="1.50" fill="#56616c"/>
<rect x="944.50" y="63.10" width="43.47" height="1.50" fill="#56616c"/>
<rect x="944.50" y="64.60" width="28.29" height="1.50" fill="#56616c"/>
<rect x="944.50" y="66.10" width="28.98" height="1.50" fill="#56616c"/>
<rect x="944.50" y="67.60" width="29.67" height="1.50" fill="#56616c"/>
<rect x="944.50" y="69.10" width="23.46" height="1.50" fill="#56616c"/>
<rect x="944.50" y="70.60" width="8.28" height="1.50" fill="#56616c"/>
<rect x="944.50" y="72.10" width="3.45" height="1.50" fill="#56616c"/>
<rect x="944.50" y="40.90" width="0.69" height="0.9" fill="#d8dee9" opacity="0.5"/>
<rect x="945.19" y="40.90" width="0.69" height="0.9" fill="#d8dee9" opacity="0.5"/>
<rect x="945.88" y="40.90" width="2.07" height="0.9" fill="#d8dee9" opacity="0.45"/>
<rect x="944.50" y="43.90" width="2.07" height="0.9" fill="#c695c6" opacity="0.7"/>
<rect x="947.26" y="43.90" width="6.90" height="0.9" fill="#d8dee9" opacity="0.45"/>
<rect x="954.16" y="43.90" width="0.69" height="0.9" fill="#d8dee9" opacity="0.5"/>
<rect x="954.85" y="43.90" width="4.83" height="0.9" fill="#d8dee9" opacity="0.45"/>
<rect x="959.68" y="43.90" width="0.69" height="0.9" fill="#d8dee9" opacity="0.5"/>
<rect x="960.37" y="43.90" width="4.83" height="0.9" fill="#d8dee9" opacity="0.45"/>
<rect x="965.20" y="43.90" width="0.69" height="0.9" fill="#d8dee9" opacity="0.5"/>
<rect x="965.89" y="43.90" width="4.14" height="0.9" fill="#6699cc" opacity="0.7"/>
<rect x="970.03" y="43.90" width="0.69" height="0.9" fill="#d8dee9" opacity="0.5"/>
<rect x="944.50" y="45.40" width="2.07" height="0.9" fill="#c695c6" opacity="0.7"/>
<rect x="947.26" y="45.40" width="6.90" height="0.9" fill="#d8dee9" opacity="0.45"/>
<rect x="954.16" y="45.40" width="0.69" height="0.9" fill="#d8dee9" opacity="0.5"/>
<rect x="954.85" y="45.40" width="5.52" height="0.9" fill="#d8dee9" opacity="0.45"/>
<rect x="960.37" y="45.40" width="0.69" height="0.9" fill="#d8dee9" opacity="0.5"/>
<rect x="961.06" y="45.40" width="4.14" height="0.9" fill="#d8dee9" opacity="0.45"/>
<rect x="965.20" y="45.40" width="0.69" height="0.9" fill="#d8dee9" opacity="0.5"/>
<rect x="965.89" y="45.40" width="6.21" height="0.9" fill="#6699cc" opacity="0.7"/>
<rect x="972.10" y="45.40" width="0.69" height="0.9" fill="#d8dee9" opacity="0.5"/>
<rect x="944.50" y="46.90" width="2.07" height="0.9" fill="#c695c6" opacity="0.7"/>
<rect x="947.26" y="46.90" width="6.90" height="0.9" fill="#d8dee9" opacity="0.45"/>
<rect x="954.16" y="46.90" width="0.69" height="0.9" fill="#d8dee9" opacity="0.5"/>
<rect x="954.85" y="46.90" width="5.52" height="0.9" fill="#d8dee9" opacity="0.45"/>
<rect x="960.37" y="46.90" width="0.69" height="0.9" fill="#d8dee9" opacity="0.5"/>
<rect x="961.06" y="46.90" width="6.90" height="0.9" fill="#d8dee9" opacity="0.45"/>
<rect x="967.96" y="46.90" width="0.69" height="0.9" fill="#d8dee9" opacity="0.5"/>
<rect x="968.65" y="46.90" width="6.21" height="0.9" fill="#6699cc" opacity="0.7"/>
<rect x="974.86" y="46.90" width="0.69" height="0.9" fill="#d8dee9" opacity="0.5"/>
<rect x="944.50" y="49.90" width="3.45" height="0.9" fill="#c695c6" opacity="0.7"/>
<rect x="948.64" y="49.90" width="11.73" height="0.9" fill="#f9ae58" opacity="0.7"/>
<rect x="961.06" y="49.90" width="4.83" height="0.9" fill="#ec5f66" opacity="0.7"/>
<rect x="966.58" y="49.90" width="6.21" height="0.9" fill="#5fb4b4" opacity="0.7"/>
<rect x="944.50" y="51.40" width="0.69" height="0.9" fill="#d8dee9" opacity="0.5"/>
<rect x="947.26" y="52.90" width="0.69" height="0.9" fill="#a6acb9" opacity="0.5"/>
<rect x="947.95" y="52.90" width="0.69" height="0.9" fill="#a6acb9" opacity="0.5"/>
<rect x="948.64" y="52.90" width="0.69" height="0.9" fill="#a6acb9" opacity="0.5"/>
<rect x="947.95" y="54.40" width="0.69" height="0.9" fill="#a6acb9" opacity="0.5"/>
<rect x="949.33" y="54.40" width="2.07" height="0.9" fill="#a6acb9" opacity="0.45"/>
<rect x="952.09" y="54.40" width="2.07" height="0.9" fill="#a6acb9" opacity="0.45"/>
<rect x="954.85" y="54.40" width="6.90" height="0.9" fill="#a6acb9" opacity="0.45"/>
<rect x="961.75" y="54.40" width="0.69" height="0.9" fill="#a6acb9" opacity="0.5"/>
<rect x="947.95" y="55.90" width="0.69" height="0.9" fill="#a6acb9" opacity="0.5"/>
<rect x="947.95" y="57.40" width="0.69" height="0.9" fill="#a6acb9" opacity="0.5"/>
<rect x="949.33" y="57.40" width="4.83" height="0.9" fill="#c695c6" opacity="0.7"/>
<rect x="954.85" y="57.40" width="2.76" height="0.9" fill="#a6acb9" opacity="0.45"/>
<rect x="947.95" y="58.90" width="0.69" height="0.9" fill="#a6acb9" opacity="0.5"/>
<rect x="948.64" y="58.90" width="0.69" height="0.9" fill="#a6acb9" opacity="0.5"/>
<rect x="947.26" y="60.40" width="4.14" height="0.9" fill="#ec5f66" opacity="0.7"/>
<rect x="952.09" y="60.40" width="5.52" height="0.9" fill="#c695c6" opacity="0.7"/>
<rect x="958.30" y="60.40" width="1.38" height="0.9" fill="#5fb4b4" opacity="0.7"/>
<rect x="959.68" y="60.40" width="0.69" height="0.9" fill="#d8dee9" opacity="0.5"/>
<rect x="960.37" y="60.40" width="0.69" height="0.9" fill="#d8dee9" opacity="0.5"/>
<rect x="947.26" y="61.90" width="0.69" height="0.9" fill="#d8dee9" opacity="0.5"/>
<rect x="950.02" y="63.40" width="4.14" height="0.9" fill="#6699cc" opacity="0.7"/>
<rect x="954.16" y="63.40" width="0.69" height="0.9" fill="#a6acb9" opacity="0.5"/>
<rect x="954.85" y="63.40" width="0.69" height="0.9" fill="#a6acb9" opacity="0.5"/>
<rect x="955.54" y="63.40" width="4.14" height="0.9" fill="#6699cc" opacity="0.7"/>
<rect x="959.68" y="63.40" width="0.69" height="0.9" fill="#d8dee9" opacity="0.5"/>
<rect x="960.37" y="63.40" width="0.69" height="0.9" fill="#5fb4b4" opacity="0.5"/>
<rect x="961.06" y="63.40" width="4.14" height="0.9" fill="#99c794" opacity="0.7"/>
<rect x="965.20" y="63.40" width="0.69" height="0.9" fill="#5fb4b4" opacity="0.5"/>
<rect x="965.89" y="63.40" width="0.69" height="0.9" fill="#d8dee9" opacity="0.5"/>
<rect x="967.27" y="63.40" width="5.52" height="0.9" fill="#c695c6" opacity="0.7"/>
<rect x="973.48" y="63.40" width="0.69" height="0.9" fill="#d8dee9" opacity="0.5"/>
<rect x="974.17" y="63.40" width="6.21" height="0.9" fill="#6699cc" opacity="0.7"/>
<rect x="981.07" y="63.40" width="0.69" height="0.9" fill="#5fb4b4" opacity="0.7"/>
<rect x="981.76" y="63.40" width="3.45" height="0.9" fill="#f9ae58" opacity="0.7"/>
<rect x="985.21" y="63.40" width="0.69" height="0.9" fill="#d8dee9" opacity="0.5"/>
<rect x="986.59" y="63.40" width="0.69" height="0.9" fill="#d8dee9" opacity="0.5"/>
<rect x="952.78" y="64.90" width="0.69" height="0.9" fill="#5fb4b4" opacity="0.7"/>
<rect x="953.47" y="64.90" width="3.45" height="0.9" fill="#d8dee9" opacity="0.45"/>
<rect x="956.92" y="64.90" width="0.69" height="0.9" fill="#a6acb9" opacity="0.5"/>
<rect x="957.61" y="64.90" width="0.69" height="0.9" fill="#a6acb9" opacity="0.5"/>
<rect x="958.30" y="64.90" width="8.97" height="0.9" fill="#6699cc" opacity="0.7"/>
<rect x="967.27" y="64.90" width="0.69" height="0.9" fill="#d8dee9" opacity="0.5"/>
<rect x="967.96" y="64.90" width="0.69" height="0.9" fill="#5fb4b4" opacity="0.5"/>
<rect x="968.65" y="64.90" width="1.38" height="0.9" fill="#99c794" opacity="0.7"/>
<rect x="970.03" y="64.90" width="0.69" height="0.9" fill="#5fb4b4" opacity="0.5"/>
<rect x="970.72" y="64.90" width="0.69" height="0.9" fill="#d8dee9" opacity="0.5"/>
<rect x="971.41" y="64.90" width="0.69" height="0.9" fill="#d8dee9" opacity="0.5"/>
<rect x="952.78" y="66.40" width="0.69" height="0.9" fill="#5fb4b4" opacity="0.7"/>
<rect x="953.47" y="66.40" width="3.45" height="0.9" fill="#d8dee9" opacity="0.45"/>
<rect x="956.92" y="66.40" width="0.69" height="0.9" fill="#a6acb9" opacity="0.5"/>
<rect x="957.61" y="66.40" width="0.69" height="0.9" fill="#a6acb9" opacity="0.5"/>
<rect x="958.30" y="66.40" width="4.14" height="0.9" fill="#6699cc" opacity="0.7"/>
<rect x="962.44" y="66.40" width="0.69" height="0.9" fill="#d8dee9" opacity="0.5"/>
<rect x="963.13" y="66.40" width="0.69" height="0.9" fill="#5fb4b4" opacity="0.5"/>
<rect x="963.82" y="66.40" width="6.90" height="0.9" fill="#99c794" opacity="0.7"/>
<rect x="970.72" y="66.40" width="0.69" height="0.9" fill="#5fb4b4" opacity="0.5"/>
<rect x="971.41" y="66.40" width="0.69" height="0.9" fill="#d8dee9" opacity="0.5"/>
<rect x="972.10" y="66.40" width="0.69" height="0.9" fill="#d8dee9" opacity="0.5"/>
<rect x="952.78" y="67.90" width="0.69" height="0.9" fill="#5fb4b4" opacity="0.7"/>
<rect x="953.47" y="67.90" width="3.45" height="0.9" fill="#d8dee9" opacity="0.45"/>
<rect x="956.92" y="67.90" width="0.69" height="0.9" fill="#a6acb9" opacity="0.5"/>
<rect x="957.61" y="67.90" width="0.69" height="0.9" fill="#a6acb9" opacity="0.5"/>
<rect x="958.30" y="67.90" width="4.83" height="0.9" fill="#6699cc" opacity="0.7"/>
<rect x="963.13" y="67.90" width="0.69" height="0.9" fill="#d8dee9" opacity="0.5"/>
<rect x="963.82" y="67.90" width="0.69" height="0.9" fill="#5fb4b4" opacity="0.5"/>
<rect x="964.51" y="67.90" width="6.90" height="0.9" fill="#99c794" opacity="0.7"/>
<rect x="971.41" y="67.90" width="0.69" height="0.9" fill="#5fb4b4" opacity="0.5"/>
<rect x="972.10" y="67.90" width="0.69" height="0.9" fill="#d8dee9" opacity="0.5"/>
<rect x="972.79" y="67.90" width="0.69" height="0.9" fill="#d8dee9" opacity="0.5"/>
<rect x="952.78" y="69.40" width="0.69" height="0.9" fill="#5fb4b4" opacity="0.7"/>
<rect x="953.47" y="69.40" width="3.45" height="0.9" fill="#d8dee9" opacity="0.45"/>
<rect x="956.92" y="69.40" width="0.69" height="0.9" fill="#a6acb9" opacity="0.5"/>
<rect x="957.61" y="69.40" width="0.69" height="0.9" fill="#a6acb9" opacity="0.5"/>
<rect x="958.30" y="69.40" width="6.90" height="0.9" fill="#6699cc" opacity="0.7"/>
<rect x="965.20" y="69.40" width="0.69" height="0.9" fill="#d8dee9" opacity="0.5"/>
<rect x="965.89" y="69.40" width="0.69" height="0.9" fill="#d8dee9" opacity="0.5"/>
<rect x="966.58" y="69.40" width="0.69" height="0.9" fill="#d8dee9" opacity="0.5"/>
<rect x="950.02" y="70.90" width="0.69" height="0.9" fill="#d8dee9" opacity="0.5"/>
<rect x="950.71" y="70.90" width="0.69" height="0.9" fill="#d8dee9" opacity="0.5"/>
<rect x="951.40" y="70.90" width="0.69" height="0.9" fill="#d8dee9" opacity="0.5"/>
<rect x="947.26" y="72.40" width="0.69" height="0.9" fill="#d8dee9" opacity="0.5"/>
<rect x="947.26" y="75.40" width="0.69" height="0.9" fill="#a6acb9" opacity="0.5"/>
<rect x="947.95" y="75.40" width="0.69" height="0.9" fill="#a6acb9" opacity="0.5"/>
<rect x="948.64" y="75.40" width="0.69" height="0.9" fill="#a6acb9" opacity="0.5"/>
<rect x="947.95" y="76.90" width="0.69" height="0.9" fill="#a6acb9" opacity="0.5"/>
<rect x="949.33" y="76.90" width="4.83" height="0.9" fill="#a6acb9" opacity="0.45"/>
<rect x="954.85" y="76.90" width="2.07" height="0.9" fill="#a6acb9" opacity="0.45"/>
<rect x="957.61" y="76.90" width="6.90" height="0.9" fill="#a6acb9" opacity="0.45"/>
<rect x="964.51" y="76.90" width="0.69" height="0.9" fill="#a6acb9" opacity="0.5"/>
<rect x="947.95" y="78.40" width="0.69" height="0.9" fill="#a6acb9" opacity="0.5"/>
<rect x="947.95" y="79.90" width="0.69" height="0.9" fill="#a6acb9" opacity="0.5"/>
<rect x="949.33" y="79.90" width="4.83" height="0.9" fill="#c695c6" opacity="0.7"/>
<rect x="954.85" y="79.90" width="2.76" height="0.9" fill="#a6acb9" opacity="0.45"/>
<rect x="947.95" y="81.40" width="0.69" height="0.9" fill="#a6acb9" opacity="0.5"/>
<rect x="948.64" y="81.40" width="0.69" height="0.9" fill="#a6acb9" opacity="0.5"/>
<rect x="947.26" y="82.90" width="4.14" height="0.9" fill="#ec5f66" opacity="0.7"/>
<rect x="952.09" y="82.90" width="5.52" height="0.9" fill="#c695c6" opacity="0.7"/>
<rect x="958.30" y="82.90" width="2.76" height="0.9" fill="#5fb4b4" opacity="0.7"/>
<rect x="961.06" y="82.90" width="0.69" height="0.9" fill="#d8dee9" opacity="0.5"/>
<rect x="961.75" y="82.90" width="0.69" height="0.9" fill="#d8dee9" opacity="0.5"/>
<rect x="947.26" y="84.40" width="0.69" height="0.9" fill="#d8dee9" opacity="0.5"/>
<rect x="950.02" y="85.90" width="4.14" height="0.9" fill="#6699cc" opacity="0.7"/>
<rect x="954.16" y="85.90" width="0.69" height="0.9" fill="#a6acb9" opacity="0.5"/>
<rect x="954.85" y="85.90" width="0.69" height="0.9" fill="#a6acb9" opacity="0.5"/>
<rect x="955.54" y="85.90" width="8.28" height="0.9" fill="#6699cc" opacity="0.7"/>
<rect x="963.82" y="85.90" width="0.69" height="0.9" fill="#d8dee9" opacity="0.5"/>
<rect x="964.51" y="85.90" width="0.69" height="0.9" fill="#5fb4b4" opacity="0.5"/>
<rect x="965.20" y="85.90" width="4.14" height="0.9" fill="#99c794" opacity="0.7"/>
<rect x="969.34" y="85.90" width="0.69" height="0.9" fill="#5fb4b4" opacity="0.5"/>
<rect x="970.03" y="85.90" width="0.69" height="0.9" fill="#d8dee9" opacity="0.5"/>
<rect x="970.72" y="85.90" width="0.69" height="0.9" fill="#d8dee9" opacity="0.5"/>
<rect x="947.26" y="87.40" width="0.69" height="0.9" fill="#d8dee9" opacity="0.5"/>
<rect x="944.50" y="88.90" width="0.69" height="0.9" fill="#d8dee9" opacity="0.5"/>
</svg>
<div class="abs" style="left:1015.8px;top:43.8px;width:5.2px;height:512px;border-radius:2.6px;background:#3c444c"></div>
<div class="abs" style="left:1015.8px;top:43.8px;width:5.2px;height:276px;border-radius:2.6px;background:#5b636b"></div>
<div id="status">
 <svg class="ov" width="40" height="17" style="top:-1px"><rect x="9.5" y="4.5" width="11" height="8" fill="none" stroke="#5d6269" stroke-width="1"/><rect x="9" y="10.5" width="12" height="2.2" fill="#5d6269"/></svg>
 <div class="st" style="left:29.6px">9 lines, 268 characters selected</div>
 <div class="st" style="left:889.3px">Spaces: 4</div>
 <div class="st" style="left:973.2px">PHP</div>
</div>
</body></html>
